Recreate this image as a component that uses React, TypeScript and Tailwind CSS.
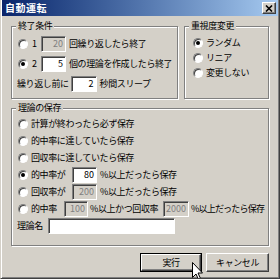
import React from 'react';

const Radio = ({ checked }: { checked?: boolean }) => (
  <span className="w-[10px] h-[10px] shrink-0 rounded-full bg-white border border-t-[#808080] border-l-[#808080] border-b-white border-r-white shadow-[inset_1px_1px_0_#404040] flex items-center justify-center">
    {checked && <span className="w-[4px] h-[4px] rounded-full bg-black" />}
  </span>
);

const Field = ({ value, disabled, className }: { value: string; disabled?: boolean; className: string }) => (
  <div
    className={`h-[16px] shrink-0 border border-t-[#808080] border-l-[#808080] border-b-white border-r-white shadow-[inset_1px_1px_0_#404040] flex items-center justify-end px-[2px] tracking-normal ${
      disabled ? 'bg-[#d4d0c8] text-[#808080]' : 'bg-white text-black'
    } ${className}`}
  >
    {value}
  </div>
);

const Group = ({ label, className, children }: { label: string; className: string; children: React.ReactNode }) => (
  <div className={`relative border border-[#808080] shadow-[inset_1px_1px_0_#fff,1px_1px_0_#fff] ${className}`}>
    <span className="absolute left-[4px] top-[-7px] px-[2px] leading-[12px] bg-[#d4d0c8]">{label}</span>
    {children}
  </div>
);

const App: React.FC = () => {
  return (
    <div className="w-[280px] h-[279px] relative overflow-hidden bg-[#d4d0c8] flex flex-col border-l border-l-[#d4d0c8] border-r border-r-[#404040] border-b border-b-[#404040] shadow-[inset_1px_0_0_#fff,inset_-1px_-1px_0_#808080] font-['Noto_Sans_CJK_JP',sans-serif] text-[9px] leading-[12px] tracking-[-0.4px] text-black">
      {/* title bar */}
      <div className="mx-[1px] h-[16px] shrink-0 bg-linear-to-r from-[#0a246a] to-[#a6caf0] flex items-center justify-between pl-[3px] pr-[2px]">
        <span className="text-white font-bold text-[10px] tracking-[0.5px]">自動運転</span>
        <div className="w-[14px] h-[12px] bg-[#d4d0c8] border border-t-white border-l-white border-r-[#404040] border-b-[#404040] shadow-[inset_-1px_-1px_0_#808080] flex items-center justify-center">
          <svg width="8" height="7" viewBox="0 0 8 7">
            <path d="M1 0.5 L7 6.5 M7 0.5 L1 6.5" stroke="black" strokeWidth="1.6" />
          </svg>
        </div>
      </div>

      <div className="flex flex-col px-[10px] pt-[10px]">
        <div className="flex gap-[6px]">
          <Group label="終了条件" className="w-[167px] h-[73px] pt-[7px]">
            <div className="h-[20px] flex items-center pl-[6px]">
              <Radio />
              <span className="ml-[4px] w-[9px]">1</span>
              <Field value="20" disabled className="w-[25px]" />
              <span className="ml-[3px]">回繰り返したら終了</span>
            </div>
            <div className="h-[20px] flex items-center pl-[6px]">
              <Radio checked />
              <span className="ml-[4px] w-[9px]">2</span>
              <Field value="5" className="w-[25px]" />
              <span className="ml-[3px]">個の理論を作成したら終了</span>
            </div>
            <div className="h-[20px] flex items-center pl-[5px]">
              <span>繰り返し前に</span>
              <Field value="2" className="w-[26px] ml-[2px]" />
              <span className="ml-[3px]">秒間スリープ</span>
            </div>
          </Group>

          <Group label="重視度変更" className="w-[85px] h-[73px] pt-[8px]">
            <div className="h-[15px] flex items-center gap-[3px] pl-[8px]">
              <Radio checked />
              <span>ランダム</span>
            </div>
            <div className="h-[15px] flex items-center gap-[3px] pl-[8px]">
              <Radio />
              <span>リニア</span>
            </div>
            <div className="h-[15px] flex items-center gap-[3px] pl-[8px]">
              <Radio />
              <span>変更しない</span>
            </div>
          </Group>
        </div>

        <Group label="理論の保存" className="mt-[9px] h-[138px] pt-[6px]">
          <div className="h-[17px] flex items-center gap-[3px] pl-[6px]">
            <Radio />
            <span>計算が終わったら必ず保存</span>
          </div>
          <div className="h-[17px] flex items-center gap-[3px] pl-[6px]">
            <Radio />
            <span>的中率に達していたら保存</span>
          </div>
          <div className="h-[17px] flex items-center gap-[3px] pl-[6px]">
            <Radio />
            <span>回収率に達していたら保存</span>
          </div>
          <div className="h-[17px] flex items-center pl-[6px]">
            <Radio checked />
            <span className="ml-[3px] w-[41px]">的中率が</span>
            <Field value="80" className="w-[25px]" />
            <span className="ml-[3px]">%以上だったら保存</span>
          </div>
          <div className="h-[17px] flex items-center pl-[6px]">
            <Radio />
            <span className="ml-[3px] w-[41px]">回収率が</span>
            <Field value="200" disabled className="w-[25px]" />
            <span className="ml-[3px]">%以上だったら保存</span>
          </div>
          <div className="h-[17px] flex items-center pl-[6px]">
            <Radio />
            <span className="ml-[3px] w-[33px]">的中率</span>
            <Field value="100" disabled className="w-[24px]" />
            <span className="ml-[2px] w-[73px]">%以上かつ回収率</span>
            <Field value="2000" disabled className="w-[26px]" />
            <span className="ml-[2px] tracking-[-0.8px]">%以上だったら保存</span>
          </div>
          <div className="h-[18px] flex items-center pl-[5px]">
            <span className="w-[31px]">理論名</span>
            <Field value="" className="w-[127px]" />
          </div>
        </Group>

        <div className="mt-[7px] flex justify-end gap-[4px]">
          <div className="w-[62px] h-[19px] border border-black">
            <button className="w-full h-full bg-[#d4d0c8] border border-t-white border-l-white border-r-[#404040] border-b-[#404040] shadow-[inset_-1px_-1px_0_#808080] text-[9px] leading-[12px]">
              実行
            </button>
          </div>
          <button className="w-[63px] h-[19px] bg-[#d4d0c8] border border-t-white border-l-white border-r-[#404040] border-b-[#404040] shadow-[inset_-1px_-1px_0_#808080] text-[9px] leading-[12px]">
            キャンセル
          </button>
        </div>
      </div>

      {/* mouse cursor */}
      <svg className="absolute left-[191px] top-[262px]" width="12" height="19" viewBox="0 0 12 19">
        <path d="M0.5 0.5 L0.5 15.5 L4 12 L6.5 17.5 L8.5 16.5 L6 11 L10.5 11 Z" fill="white" stroke="black" strokeWidth="1" />
      </svg>
    </div>
  );
};

export default App;
